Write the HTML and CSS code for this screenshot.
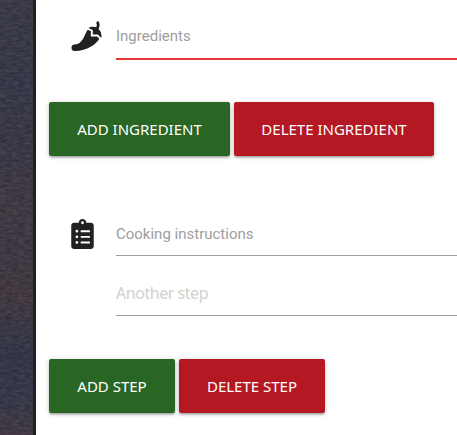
FILE: index.html
```html
<!DOCTYPE html>
<html lang="en">
<head>
<meta charset="utf-8">
<title>Add recipe</title>
<link rel="stylesheet" href="styles.css">
</head>
<body>
<div class="page">
  <div class="backdrop">
    <svg class="grain" width="33" height="435" aria-hidden="true">
      <filter id="grain" x="0" y="0" width="100%" height="100%" color-interpolation-filters="sRGB">
        <feTurbulence type="fractalNoise" baseFrequency="0.16 0.4" numOctaves="3" seed="8"/>
        <feColorMatrix values="0.5 0 0 0 -0.02  0.4 0.06 0 0 -0.02  0.3 0.2 0 0 0.01  0 0 0 0 1"/>
      </filter>
      <rect width="33" height="435" filter="url(#grain)"/>
    </svg>
  </div>
  <main class="form">
    <section class="group">
      <div class="field">
        <svg class="icon" viewBox="0 0 512 512" aria-hidden="true"><path d="M330.67 263.12V173.4l-52.75-24.22C219.44 218.76 197.58 400 56 400a56 56 0 0 0 0 112c212.64 0 370.65-122.87 419.18-210.34l-37.05-38.54zm131.09-128.37C493.92 74.91 477.18 26.48 458.62 3a8 8 0 0 0-11.93-.59l-22.9 23a8.06 8.06 0 0 0-.89 10.23c6.86 10.36 17.05 35.1-1.4 72.32A142.85 142.85 0 0 0 364.34 96c-28 0-54 8.54-76.34 22.59l74.67 34.29v78.24h89.09L506.44 288c3.26-12.62 5.56-25.63 5.56-39.31a154 154 0 0 0-50.24-113.94z"/></svg>
        <div class="input invalid"><span class="label">Ingredients</span></div>
      </div>
      <div class="actions">
        <button class="btn add wide">ADD INGREDIENT</button>
        <button class="btn delete wider">DELETE INGREDIENT</button>
      </div>
    </section>
    <section class="group steps">
      <div class="field">
        <svg class="icon narrow" viewBox="0 0 384 512" aria-hidden="true"><path d="M336 64h-80c0-35.3-28.7-64-64-64s-64 28.7-64 64H48C21.5 64 0 85.5 0 112v352c0 26.500 21.500 48 48 48h288c26.500 0 48-21.500 48-48V112c0-26.500-21.500-48-48-48zM96 424c-13.300 0-24-10.700-24-24s10.700-24 24-24 24 10.700 24 24-10.700 24-24 24zm0-96c-13.300 0-24-10.700-24-24s10.700-24 24-24 24 10.700 24 24-10.700 24-24 24zm0-96c-13.300 0-24-10.700-24-24s10.700-24 24-24 24 10.700 24 24-10.700 24-24 24zm96-192c13.300 0 24 10.700 24 24s-10.700 24-24 24-24-10.700-24-24 10.700-24 24-24zm128 368c0 4.400-3.600 8-8 8H168c-4.400 0-8-3.600-8-8v-16c0-4.400 3.600-8 8-8h144c4.400 0 8 3.600 8 8zm0-96c0 4.400-3.600 8-8 8H168c-4.400 0-8-3.600-8-8v-16c0-4.400 3.600-8 8-8h144c4.400 0 8 3.600 8 8zm0-96c0 4.400-3.600 8-8 8H168c-4.400 0-8-3.600-8-8v-16c0-4.400 3.600-8 8-8h144c4.400 0 8 3.600 8 8z"/></svg>
        <div class="input"><span class="label">Cooking instructions</span></div>
      </div>
      <div class="field extra">
        <div class="input"><span class="placeholder">Another step</span></div>
      </div>
      <div class="actions">
        <button class="btn add short">ADD STEP</button>
        <button class="btn delete medium">DELETE STEP</button>
      </div>
    </section>
  </main>
</div>
</body>
</html>
```
FILE: styles.css
```css
* { box-sizing: border-box; }
body { margin: 0; background: #fff; overflow: hidden; }
.page { display: flex; height: 435px; }
.backdrop {
  position: relative;
  flex: 0 0 36px;
  border-right: 3px solid #212121;
  background: #383743;
}
.grain { display: block; }
.backdrop::after {
  content: "";
  position: absolute;
  inset: 0;
  background: linear-gradient(#3b3c4a 0, #363a4b 20%, #3a3948 35%, #443b43 47%, #3e3a43 57%, #463b40 68%, #30374b 81%, #343a4b 92%, #453a43 100%);
  opacity: .68;
}
.form { flex: 1; min-width: 0; padding: 14px 0 0 13px; }
.group.steps { margin-top: 56px; }
.field { display: flex; height: 46px; padding-left: 22px; }
.icon { flex: none; width: 31px; height: 30px; margin: 7px 14px 0 0; fill: #212121; }
.icon.narrow { width: 23px; margin-right: 22px; }
.steps .field { height: 44px; }
.steps .icon { margin-top: 7px; }
.input { flex: 1; height: 44px; border-bottom: 1px solid #9e9e9e; }
.input.invalid { height: 46px; border-bottom: 2px solid #e53935; }
.label {
  display: block;
  font: 15px/44px Roboto, sans-serif;
  color: #9e9e9e;
}
.steps .field.extra { height: 46px; margin-top: 16px; padding-left: 67px; }
.placeholder { display: block; font: 16px/43px "Noto Sans", sans-serif; letter-spacing: -.46px; color: #d1d1d1; }
.extra .input { height: 44px; }
.actions { display: flex; gap: 4px; margin-top: 42px; }
.steps .actions { margin-top: 41px; }
.btn {
  height: 54px;
  padding: 0;
  border: 0;
  border-radius: 2px;
  color: #fff;
  font: 15px/54px "Noto Sans", sans-serif;
  letter-spacing: 0;
  white-space: nowrap;
  box-shadow: 0 2px 2px rgba(0,0,0,.14), 0 3px 1px -2px rgba(0,0,0,.12), 0 1px 5px rgba(0,0,0,.2);
}
.add { background: #296624; }
.delete { background: #b41923; }
.wide { width: 181px; }
.wider { width: 200px; }
.short { width: 126px; }
.medium { width: 146px; }
```
